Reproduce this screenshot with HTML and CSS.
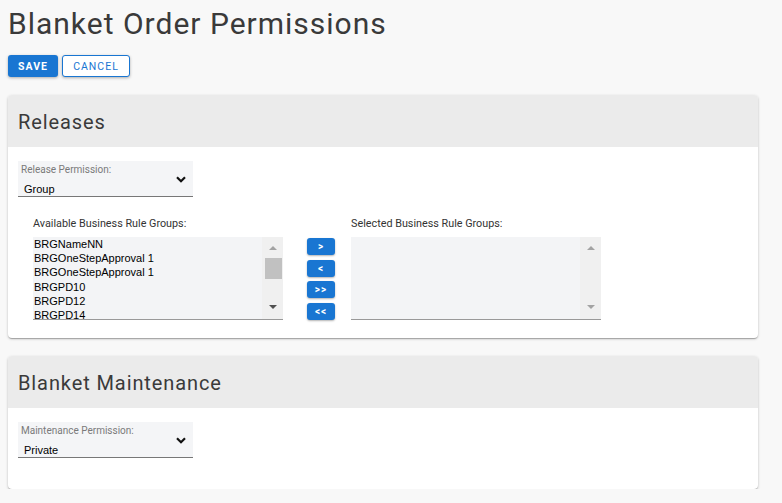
FILE: index.html
```html
<!DOCTYPE html>
<html lang="en">
<head>
  <meta charset="UTF-8" />
  <meta name="viewport" content="width=device-width, initial-scale=1.0" />
  <title>Blanket Order Permissions</title>
  <link rel="stylesheet" href="styles.css">
</head>
<body>

  <h1 class="page-title">Blanket Order Permissions</h1>

  <!-- Save / Cancel -->
  <div class="actions">
    <button class="btn btn-primary">Save</button>
    <button class="btn btn-outline">Cancel</button>
  </div>

  <!-- Releases -->
  <section class="card">
    <div class="card-header"><h2>Releases</h2></div>
    <div class="card-body">
      <div class="select">
        <div class="select-text">
          <div class="select-label">Release Permission:</div>
          <div class="select-value">Group</div>
        </div>
        <svg class="chevron" width="10" height="7" viewBox="0 0 10 7">
          <polyline points="1,1.2 5,5.2 9,1.2" fill="none" stroke="#111" stroke-width="2.2" />
        </svg>
      </div>

      <div class="transfer">
        <div class="transfer-col">
          <div class="list-label">Available Business Rule Groups:</div>
          <div class="listbox">
            <div class="list-items">
              <div>BRGNameNN</div>
              <div>BRGOneStepApproval 1</div>
              <div>BRGOneStepApproval 1</div>
              <div>BRGPD10</div>
              <div>BRGPD12</div>
              <div>BRGPD14</div>
            </div>
            <div class="scrollbar">
              <span class="arrow-up"></span>
              <span class="thumb"></span>
              <span class="arrow-down dark"></span>
            </div>
          </div>
        </div>

        <div class="transfer-buttons">
          <button class="btn-move">&gt;</button>
          <button class="btn-move">&lt;</button>
          <button class="btn-move">&gt;&gt;</button>
          <button class="btn-move">&lt;&lt;</button>
        </div>

        <div class="transfer-col">
          <div class="list-label">Selected Business Rule Groups:</div>
          <div class="listbox">
            <div class="list-items"></div>
            <div class="scrollbar">
              <span class="arrow-up"></span>
              <span class="arrow-down"></span>
            </div>
          </div>
        </div>
      </div>
    </div>
  </section>

  <!-- Blanket Maintenance -->
  <section class="card">
    <div class="card-header"><h2>Blanket Maintenance</h2></div>
    <div class="card-body">
      <div class="select select-last">
        <div class="select-text">
          <div class="select-label">Maintenance Permission:</div>
          <div class="select-value">Private</div>
        </div>
        <svg class="chevron" width="10" height="7" viewBox="0 0 10 7">
          <polyline points="1,1.2 5,5.2 9,1.2" fill="none" stroke="#111" stroke-width="2.2" />
        </svg>
      </div>
    </div>
  </section>

</body>
</html>
```

FILE: styles.css
```css
body {
  margin: 0;
  padding: 0 8px;
  background: #f8f8f8;
  font-family: Roboto, "Liberation Sans", Arial, sans-serif;
  color: #333333;
}

.page-title {
  margin: 6px 0 0;
  font-size: 30px;
  line-height: 36px;
  font-weight: 400;
  letter-spacing: 1px;
  color: #3a3a3a;
}

.actions {
  display: flex;
  gap: 4px;
  margin-top: 13px;
}

.btn {
  height: 22px;
  padding: 0 10px;
  border-radius: 3px;
  font-family: Roboto, sans-serif;
  font-size: 10.5px;
  letter-spacing: 1px;
  text-transform: uppercase;
  cursor: pointer;
  box-shadow: 0 1px 3px rgba(0, 0, 0, 0.3);
}

.btn-primary {
  background-color: #1976d2;
  border: none;
  color: #ffffff;
  font-weight: 700;
  width: 50px;
}

.btn-outline {
  background-color: #ffffff;
  border: 1px solid #1976d2;
  color: #1976d2;
  font-weight: 400;
  width: 68px;
}

.card {
  width: 750px;
  margin-top: 18px;
  background-color: #ffffff;
  border-radius: 4px;
  box-shadow: 0 1px 3px rgba(0, 0, 0, 0.2), 0 1px 1px rgba(0, 0, 0, 0.14), 0 2px 1px -1px rgba(0, 0, 0, 0.12);
}

.card + .card {
  margin-top: 18px;
}

.card-header {
  background-color: #ebebeb;
  border-radius: 4px 4px 0 0;
  height: 52px;
  padding: 15px 10px 0;
  box-sizing: border-box;
}

.card-header h2 {
  margin: 0;
  font-size: 20px;
  line-height: 24px;
  font-weight: 400;
  letter-spacing: 0.9px;
  color: #3a3a3a;
}

.card-body {
  padding: 14px 10px 18px;
}

.select {
  width: 175px;
  height: 35px;
  background-color: #f4f5f7;
  border-bottom: 1px solid #777777;
  display: flex;
  justify-content: space-between;
  align-items: flex-start;
}

.select-last {
  margin-bottom: 13px;
}

.select-text {
  padding: 3px 0 0 3px;
}

.select-label {
  font-size: 10px;
  line-height: 12px;
  color: #7a7a7a;
}

.select-value {
  margin-top: 7px;
  padding-left: 3px;
  font-family: "Liberation Sans", Arial, sans-serif;
  font-size: 11px;
  line-height: 13px;
  color: #000000;
}

.chevron {
  margin: 15px 7px 0 0;
}

.transfer {
  display: flex;
  margin: 20px 0 0 15px;
}

.transfer-col {
  width: 250px;
}

.list-label {
  font-size: 10.8px;
  line-height: 13px;
  color: #333333;
  margin-bottom: 7px;
}

.listbox {
  height: 82px;
  display: flex;
  background-color: #f3f4f6;
  border-bottom: 1px solid #999999;
}

.list-items {
  flex: 1;
  overflow: hidden;
  padding-left: 1px;
  font-family: "Liberation Sans", Arial, sans-serif;
  font-size: 11px;
  line-height: 14.2px;
  color: #000000;
}

.scrollbar {
  width: 21px;
  background-color: #f0f0f0;
  display: flex;
  flex-direction: column;
  align-items: center;
}

.arrow-up,
.arrow-down {
  width: 0;
  height: 0;
  border-left: 4.5px solid transparent;
  border-right: 4.5px solid transparent;
}

.arrow-up {
  margin-top: 9px;
  border-bottom: 4px solid #a3a3a3;
}

.arrow-down {
  margin-top: auto;
  margin-bottom: 10px;
  border-top: 4px solid #a3a3a3;
}

.arrow-down.dark {
  border-top-color: #505050;
}

.thumb {
  width: 17px;
  height: 21px;
  margin-top: 8px;
  margin-left: 1px;
  background-color: #c1c1c1;
}

.transfer-buttons {
  display: flex;
  flex-direction: column;
  gap: 4.6px;
  margin: 21px 16px 0 24px;
}

.btn-move {
  width: 28px;
  height: 17px;
  padding: 0;
  border: none;
  border-radius: 3px;
  background-color: #1976d2;
  color: #ffffff;
  font-family: Roboto, sans-serif;
  font-size: 10px;
  font-weight: 700;
  letter-spacing: 1px;
  box-shadow: 0 1px 2px rgba(0, 0, 0, 0.3);
  cursor: pointer;
}
```
